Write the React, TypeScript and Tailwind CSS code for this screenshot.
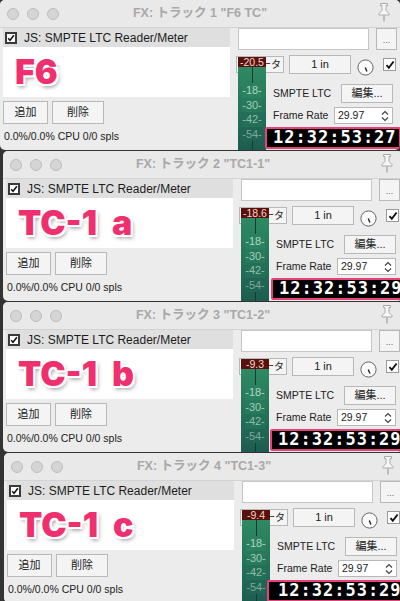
import React from 'react';

type Win = {
  pos: string;
  tcPos: string;
  track: number;
  name: string;
  label: string;
  peak: string;
  tc: string;
  cursor?: boolean;
};

const wins: Win[] = [
  { pos: 'top-0 left-0', tcPos: 'left-[265px]', track: 1, name: 'F6 TC', label: 'F6', peak: '-20.5', tc: '12:32:53:27' },
  { pos: 'top-[151px] left-[3px]', tcPos: 'left-[268px]', track: 2, name: 'TC1-1', label: 'TC-1 a', peak: '-18.6', tc: '12:32:53:29' },
  { pos: 'top-[302px] left-[3px]', tcPos: 'left-[267px]', track: 3, name: 'TC1-2', label: 'TC-1 b', peak: '-9.3', tc: '12:32:53:29' },
  { pos: 'top-[453px] left-[4px]', tcPos: 'left-[263px]', track: 4, name: 'TC1-3', label: 'TC-1 c', peak: '-9.4', tc: '12:32:53:29', cursor: true },
];

const ui = "font-['Liberation_Sans','Noto_Sans_CJK_JP',sans-serif]";
const btn = 'flex items-center justify-center bg-[#f4f4f4] border border-[#b8b8b8] text-[#222]';

const Pin = () => (
  <svg className="absolute right-[8px] top-[2px]" width="16" height="20" viewBox="0 0 16 20">
    <path d="M4.5 1.5h7v2h-1.5v5l3 3v1.5h-10v-1.5l3-3v-5h-1.5z" fill="#f6f6f6" stroke="#a9a9a9" />
    <path d="M8 13.5v6" stroke="#a9a9a9" strokeWidth="1.4" />
  </svg>
);

const Tick = ({ box }: { box: string }) => (
  <span className={`flex items-center justify-center bg-white ${box}`}>
    <svg width="10" height="10" viewBox="0 0 10 10">
      <path d="M1.5 5.2l2.3 2.6 4.8-6.3" fill="none" stroke="#111" strokeWidth="1.9" />
    </svg>
  </span>
);

const Knob = () => (
  <svg width="17" height="17" viewBox="0 0 17 17">
    <circle cx="8.5" cy="8.5" r="7.6" fill="#fbfbfb" stroke="#555" strokeWidth="0.9" />
    <path d="M8.3 8.6l1.6 4" stroke="#222" strokeWidth="1.4" />
  </svg>
);

const Stepper = () => (
  <svg width="8" height="12" viewBox="0 0 8 12">
    <path d="M1 4.5l3-3 3 3M1 7.5l3 3 3-3" fill="none" stroke="#444" strokeWidth="1.2" />
  </svg>
);

function Meter({ peak }: { peak: string }) {
  return (
    <div className="absolute left-[238px] top-[57px] bottom-0 w-[28px] flex flex-col">
      <div className="h-[10px] bg-[#5a110c] text-[#f3d6cc] text-[10.5px] leading-[10px] text-center">{peak}</div>
      <div className="relative flex-1 bg-gradient-to-b from-[#2e8a63] to-[#1d5c50]">
        <div className="absolute left-[14px] top-0 bottom-0 w-px bg-[#173a30]" />
        <div className="relative flex flex-col items-center pt-[16px] text-[11px] leading-[14.5px]">
          <span className="text-[#b0d6c2] bg-[#2b8260]">-18-</span>
          <span className="text-[#a2cab7] bg-[#287a5c]">-30-</span>
          <span className="text-[#93bcaa] bg-[#237058]">-42-</span>
          <span className="text-[#7ea999] bg-[#206554]">-54-</span>
        </div>
      </div>
    </div>
  );
}

function FxWindow({ w }: { w: Win }) {
  return (
    <div className={`absolute ${w.pos} w-[400px] h-[150px] overflow-hidden rounded-[5px] bg-[#ececec] ${ui}`}>
      <div className="relative h-[28px] flex items-center gap-2 pl-[7px] bg-[#e9e9e9] border-b border-[#d3d3d3]">
        <span className="w-3 h-3 rounded-full bg-[#d5d5d5] border border-[#bdbdbd]" />
        <span className="w-3 h-3 rounded-full bg-[#d5d5d5] border border-[#bdbdbd]" />
        <span className="w-3 h-3 rounded-full bg-[#d5d5d5] border border-[#bdbdbd]" />
        <div className="absolute inset-0 flex items-center justify-center text-[12.5px] font-bold text-[#a8a8a8]">
          FX: トラック {w.track} "{w.name}"
        </div>
        <Pin />
      </div>

      <div className="flex">
        <div className="w-[227px] ml-[3px] flex flex-col">
          <div className="h-[19px] flex items-center gap-[7px] pl-[2px] bg-[#dfdfdf] text-[12px] text-[#1c1c1c]">
            <Tick box="w-[12px] h-[12px] border-2 border-[#3a3a3a]" />
            JS: SMPTE LTC Reader/Meter
          </div>
          <div className="h-[50px] flex items-center pl-[12px] bg-white">
            <span className="font-['Inter',sans-serif] font-black text-[34px] leading-none text-[#f0306e] [word-spacing:8px] [text-shadow:-2px_-2px_0_#fff,2px_-2px_0_#fff,-2px_2px_0_#fff,2px_2px_0_#fff,0_2px_0_#fff,0_-2px_0_#fff,2px_3px_4px_rgba(0,0,0,0.45)]">
              {w.label}
            </span>
          </div>
          <div className="flex gap-1 mt-1 text-[11px]">
            <button className={`w-[45px] h-[23px] ${btn}`}>追加</button>
            <button className={`w-[52px] h-[23px] ${btn}`}>削除</button>
          </div>
          <div className="mt-[5px] pl-px text-[10.5px] text-[#222]">0.0%/0.0% CPU 0/0 spls</div>
        </div>

        <div className="flex-1 flex flex-col text-[10.5px] text-[#222]">
          <div className="flex ml-[8px]">
            <div className="w-[131px] h-[22px] bg-white border border-[#c6c6c6]" />
            <button className={`ml-[7px] w-[21px] h-[22px] pt-[4px] text-[9px] text-[#666] ${btn}`}>...</button>
          </div>
          <div className="mt-[5px] h-[19px] flex items-center">
            <button className={`ml-[6px] w-[48px] h-[17px] !justify-end pr-[2px] text-[10px] ${btn}`}>メータ</button>
            <button className={`ml-[5px] w-[62px] h-[19px] text-[11px] ${btn}`}>1 in</button>
            <span className="ml-[6px] mt-[5px]"><Knob /></span>
            <Tick box="ml-[9px] w-[13px] h-[13px] border border-[#9a9a9a]" />
          </div>
          <div className="mt-[10px] h-[19px] flex items-center">
            <span className="ml-[43px] w-[68px]">SMPTE LTC</span>
            <button className={`w-[52px] h-[19px] text-[11px] ${btn}`}>編集...</button>
          </div>
          <div className="mt-[4px] h-[17px] flex items-center">
            <span className="ml-[43px] w-[61px]">Frame Rate</span>
            <div className="w-[59px] h-[17px] flex items-center justify-between pl-[3px] pr-[3px] bg-white border border-[#b8b8b8]">
              <span>29.97</span>
              <Stepper />
            </div>
          </div>
        </div>
      </div>

      <Meter peak={w.peak} />

      <div className={`absolute ${w.tcPos} top-[127px] w-[136px] h-[22px] flex items-center pl-[6px] bg-black border-2 border-[#e8407a] rounded-[2px] font-['DejaVu_Sans_Mono',monospace] font-bold text-[17px] tracking-[1px] text-white whitespace-nowrap`}>
        {w.cursor && <span className="w-[2px] h-[16px] mr-[3px] bg-white" />}
        {w.tc}
      </div>
    </div>
  );
}

export default function App() {
  return (
    <div className="relative w-[400px] h-[601px] overflow-hidden bg-[#333]">
      {wins.map(w => (
        <FxWindow key={w.track} w={w} />
      ))}
    </div>
  );
}
